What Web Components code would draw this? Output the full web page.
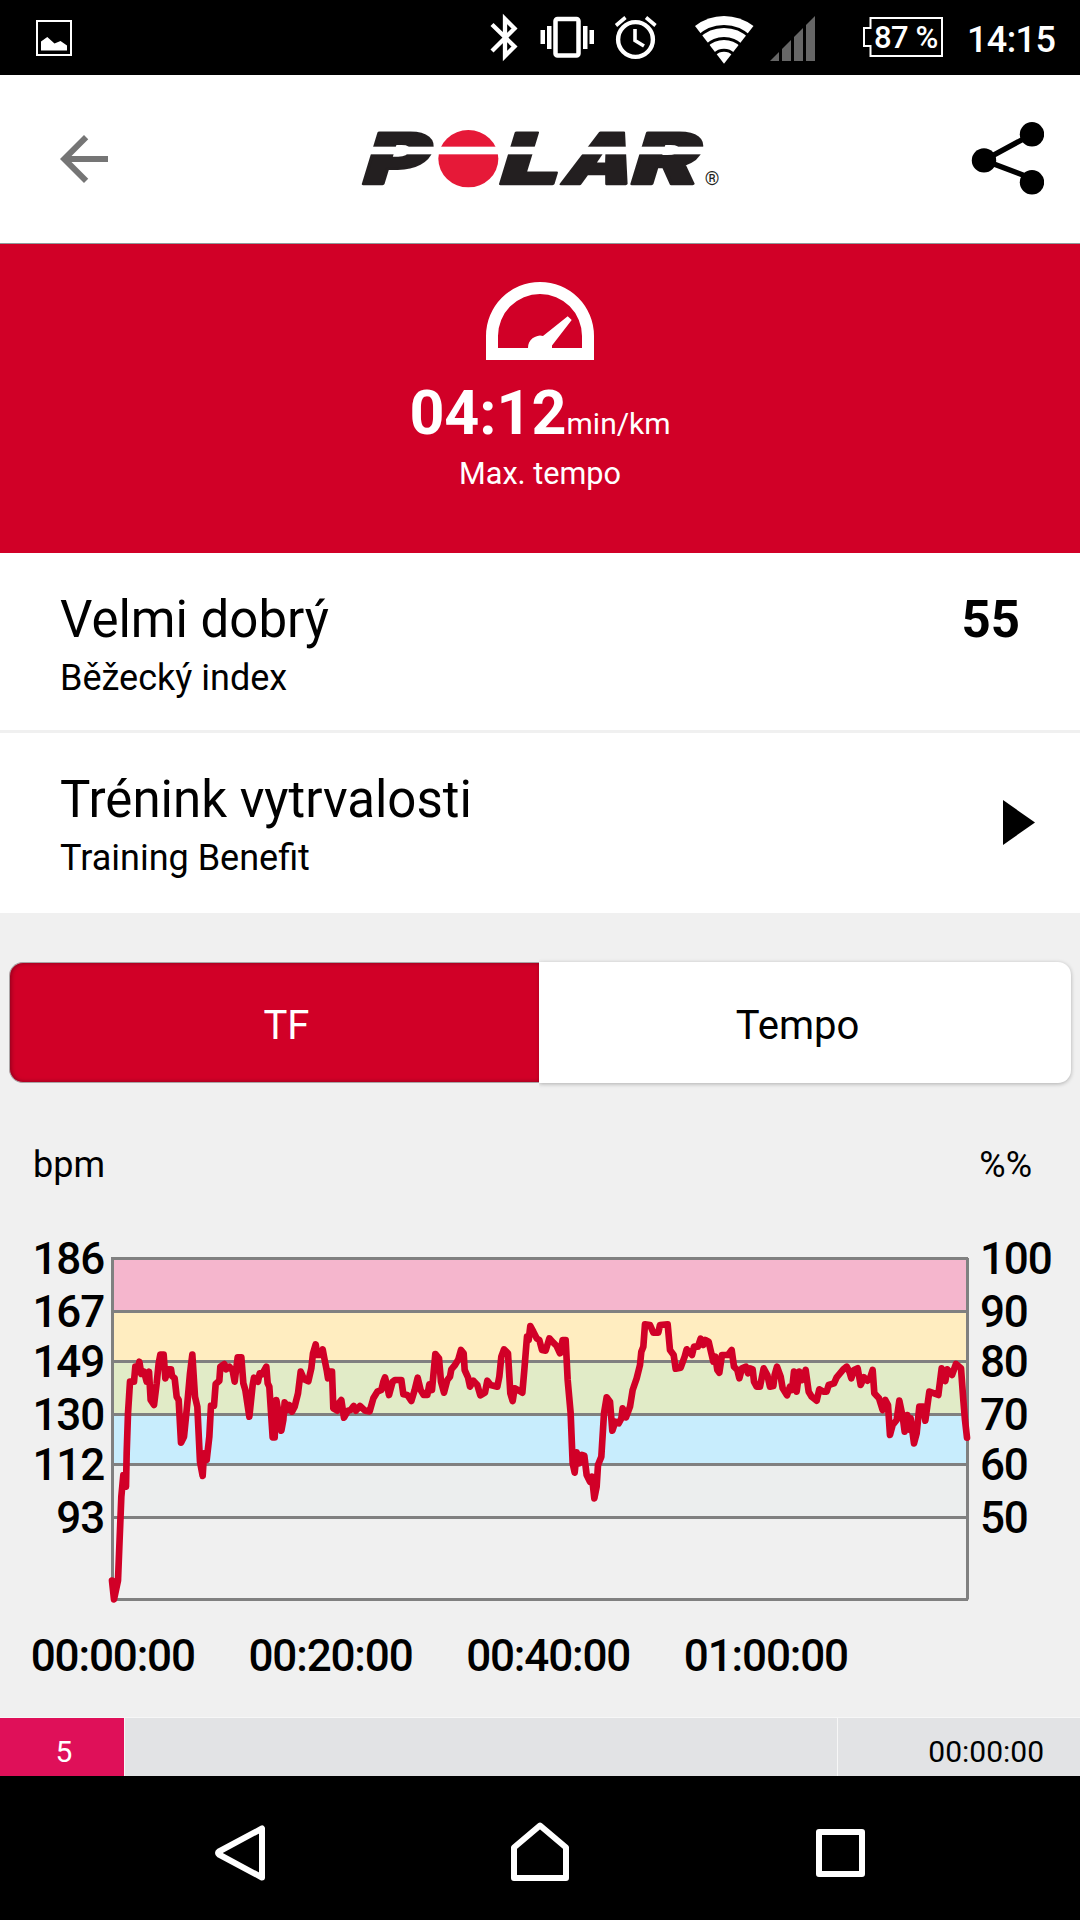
<!DOCTYPE html>
<html lang="cs">
<head>
<meta charset="utf-8">
<title>Polar</title>
<style>
  body {
    margin: 0;
    width: 1080px;
    background: #f0f0f0;
    color: #000;
    font-family: Roboto, "Noto Sans", sans-serif;
  }
</style>
</head>
<body>
<training-page></training-page>

<script>
class StatusBar extends HTMLElement {
  constructor() {
    super();
    this.attachShadow({ mode: "open" });
  }

  connectedCallback() {
    this.shadowRoot.innerHTML = `
      <style>
        :host { display: block; height: 75px; background: #000; }
        svg { display: block; font-weight: 500; fill: #fff; }
      </style>
      <svg width="1080" height="75" viewBox="0 0 1080 75">
        <!-- screenshot notification -->
        <rect x="37" y="21" width="34" height="34" fill="none" stroke="#fff" stroke-width="2"/>
        <path d="M41 50.5V41.5L47.3 37L54.5 43.5L60.5 41L67 45.5V50.5Z"/>
        <!-- bluetooth -->
        <path d="M492 24.5L514.5 46.5L505 56V19L514.5 28.5L492 51" fill="none" stroke="#fff" stroke-width="4.3"/>
        <!-- vibrate -->
        <rect x="555.5" y="19" width="23" height="36.5" rx="2" fill="none" stroke="#fff" stroke-width="4.5"/>
        <path d="M540.5 30h4.5v14h-4.5zM547 26h4.5v23h-4.5zM583 26h4.5v23h-4.5zM589.5 30h4.5v14h-4.5z"/>
        <!-- alarm -->
        <circle cx="635.5" cy="39.5" r="17.4" fill="none" stroke="#fff" stroke-width="4.4"/>
        <path d="M635 29V40.5L644 46M616 25.5L625.5 17.5M655.5 25.5L646 17.5" fill="none" stroke="#fff" stroke-width="3.6"/>
        <!-- wifi -->
        <path d="M724 63.7L695 26Q708 16 724 16T753.5 26Z"/>
        <g fill="none" stroke="#000" stroke-width="3">
          <circle cx="724" cy="63.7" r="37.2"/>
          <circle cx="724" cy="63.7" r="25.2"/>
          <circle cx="724" cy="63.7" r="13.4"/>
        </g>
        <!-- signal -->
        <path d="M770 61L815 16V61Z" fill="#666"/>
        <path d="M779 16h3v46h-3zM791 16h3v46h-3zM803 16h3v46h-3z" fill="#000"/>
        <!-- battery -->
        <path d="M870.5 18H942V56H870.5V46H864V28H870.5Z" fill="none" stroke="#fff" stroke-width="2"/>
        <text x="874" y="48" font-size="31" letter-spacing="-.5">87 %</text>
        <text x="967" y="52" font-size="36" letter-spacing="-.6">14:15</text>
      </svg>
    `;
  }
}
customElements.define("status-bar", StatusBar);

class PolarLogo extends HTMLElement {
  constructor() {
    super();
    this.attachShadow({ mode: "open" });
  }

  connectedCallback() {
    this.shadowRoot.innerHTML = `
      <style>
        :host { display: block; }
        svg { display: block; }
        .word {
          font-family: Inter, Roboto, sans-serif;
          font-size: 212px;
          font-weight: 900;
          fill: #231f20;
          stroke: #231f20;
          stroke-width: 7px;
          stroke-linejoin: round;
        }
      </style>
      <svg width="400" height="100" viewBox="0 0 1200 300">
        <g class="word">
          <text transform="translate(56 222) skewX(-17) scale(1.4 1)">P</text>
          <text transform="translate(467 222) skewX(-17) scale(1.5 1)">L</text>
          <text transform="translate(657 222) skewX(-20) scale(1.23 1)">A</text>
          <text transform="translate(862 222) skewX(-17) scale(1.42 1)">R</text>
        </g>
        <ellipse cx="385" cy="146" rx="90" ry="86" fill="#e61938"/>
        <rect x="60" y="110" width="1040" height="23" fill="#fff"/>
        <text x="1094" y="226" font-size="56" fill="#231f20">®</text>
      </svg>
    `;
  }
}
customElements.define("polar-logo", PolarLogo);

class AppHeader extends HTMLElement {
  constructor() {
    super();
    this.attachShadow({ mode: "open" });
  }

  connectedCallback() {
    this.shadowRoot.innerHTML = `
      <style>
        :host {
          display: flex;
          align-items: center;
          box-sizing: border-box;
          height: 169px;
          padding: 0 36px 0 48px;
          background: #fff;
          border-bottom: 1px solid #8f9999;
        }
        svg { display: block; }
        .logo { margin: 1px auto 0 220px; }
      </style>
      <svg width="72" height="72" viewBox="0 0 24 24" fill="#757575">
        <path d="M20 11H7.83l5.59-5.59L12 4l-8 8 8 8 1.41-1.41L7.83 13H20v-2z"/>
      </svg>
      <polar-logo class="logo"></polar-logo>
      <svg width="80" height="80" viewBox="0 0 80 80">
        <path d="M68 15.3L20 41.3L68 59.5" fill="none" stroke="#000" stroke-width="5.4"/>
        <circle cx="68" cy="15.3" r="12.2"/>
        <circle cx="20" cy="41.4" r="12.2"/>
        <circle cx="68" cy="63.3" r="12.2"/>
      </svg>
    `;
  }
}
customElements.define("app-header", AppHeader);

class PaceHero extends HTMLElement {
  constructor() {
    super();
    this.attachShadow({ mode: "open" });
  }

  connectedCallback() {
    this.shadowRoot.innerHTML = `
      <style>
        :host {
          display: flex;
          flex-direction: column;
          align-items: center;
          box-sizing: border-box;
          height: 309px;
          padding-top: 38px;
          background: #d10027;
          color: #fff;
        }
        .value {
          display: flex;
          align-items: baseline;
          margin-top: 18px;
          height: 70px;
          font-size: 30px;
          line-height: 70px;
        }
        b { font-size: 61px; }
        .label { margin-top: 8px; font-size: 30.6px; line-height: 36px; }
      </style>
      <svg width="108" height="78" viewBox="0 0 108 78" fill="#fff">
        <path fill-rule="evenodd" d="M0 78V54A54 54 0 0 1 108 54V78ZM12 66H96V54A42 42 0 0 0 12 54Z"/>
        <path d="M42 66A12 12 0 0 1 57 54L81.7 34.3L85.7 38L66 63.5V67H42Z"/>
      </svg>
      <div class="value"><b><slot name="value"></slot></b><slot name="unit"></slot></div>
      <div class="label"><slot></slot></div>
    `;
  }
}
customElements.define("pace-hero", PaceHero);

class InfoRow extends HTMLElement {
  constructor() {
    super();
    this.attachShadow({ mode: "open" });
  }

  connectedCallback() {
    this.shadowRoot.innerHTML = `
      <style>
        :host {
          display: flex;
          justify-content: space-between;
          box-sizing: border-box;
          height: 180px;
          padding: 37px 60px 0;
          background: #fff;
        }
        :host([divided]) { border-bottom: 3px solid #f0f0f0; }
        .title, .end { font-size: 51px; line-height: 60px; }
        .end { font-weight: 700; }
        .sub { margin-top: 7px; font-size: 36px; line-height: 42px; }
      </style>
      <div>
        <div class="title"><slot name="title"></slot></div>
        <div class="sub"><slot name="sub"></slot></div>
      </div>
      <div class="end"><slot></slot></div>
    `;
  }
}
customElements.define("info-row", InfoRow);

class TabBar extends HTMLElement {
  constructor() {
    super();
    this.attachShadow({ mode: "open" });
  }

  connectedCallback() {
    this.shadowRoot.innerHTML = `
      <style>
        :host {
          display: grid;
          grid-template-columns: 530px 1fr;
          margin: 49px 9px 0;
          height: 121px;
          font-size: 40px;
          line-height: 128px;
          text-align: center;
        }
        .tab { box-sizing: border-box; height: 121px; }
        .on {
          padding-left: 24px;
          border: 1px solid #a9a5a6;
          border-right: 0;
          border-radius: 14px 0 0 14px;
          background: #d10027;
          color: #fff;
          line-height: 126px;
          box-shadow: inset 1px 0 4px #8a001c;
        }
        .off {
          padding-right: 15px;
          border-radius: 0 13px 13px 0;
          background: #fff;
          box-shadow: 0 1px 4px rgba(0,0,0,0.28);
          clip-path: inset(-8px -8px -8px 0);
        }
      </style>
      <div class="tab on">TF</div>
      <div class="tab off">Tempo</div>
    `;
  }
}
customElements.define("tab-bar", TabBar);

// heart rate trace, three stretches of points: [dx, dy, points], in thirds of a pixel
const TRACE = [
  [0, 0, `36,1022 42,1078 54,1022 58,920 64,770 70,705 78,740 80,640 84,520 90,425 102,425 106,380 112,395 118,365
    124,402 132,395 140,425 147,395 152,480 162,495 170,430 176,370 181,344 191,344 196,415 204,388 213,388 216,408
    224,415 230,470 236,480 243,608 252,590 262,490 270,400 277,344 285,470 292,500 300,665 308,708 312,640 320,660
    328,590 333,497 342,497 347,432 358,422 361,380 373,372 378,388 388,380 398,392 404,425 413,352 424,352 430,430
    436,450 448,530 458,435 462,413 474,425 479,400 486,403 499,380 503,430 508,440 518,592 524,592 529,480 536,520
    544,572 550,540 554,487 562,510 568,495 576,515 584,500 594,460 602,395 612,418 625,424 634,385 639,340 647,313
    652,345 662,345 668,328 674,360 680,390 684,415 690,395 696,395 700,505 712,512 716,490 724,480 732,533 744,512
    752,510 761,498 768,512 780,498 795,512 809,514 820,475 832,455 844,450 850,425 855,412 862,440 867,465`],
  [870, 150, `8,275 15,270 34,270 40,313 52,315 64,333 74,300 83,263 92,300 101,315 112,315 118,283 126,300 136,192
    147,205 153,275 162,308 172,270 180,260 184,238 195,225 205,208 213,180 221,190 224,240 234,262 240,290 250,272
    262,285 271,316 285,308 292,272 302,285 322,290 328,260 334,200 342,178 354,190 361,310 368,333 374,295 384,300
    397,308 403,240 411,140 416,150 421,108 430,125 440,145 448,150 456,180 467,182 478,145 490,158 500,168 510,190
    518,150 527,150 533,270 542,370 548,520 554,548 560,487 568,520 576,495 583,497 590,555 600,575 606,560 613,625
    620,590 624,525 634,500 642,370 650,322 660,335 667,422 676,395 686,400 694,385 698,355 708,382 720,350 728,300
    740,265 750,225 754,185 760,170 765,103 780,105 790,128 805,128 810,105 833,103 840,180 851,195 857,236 872,233
    884,200`],
  [1740, 150, `20,178 36,195 42,170 54,170 62,146 70,165 76,150 86,155 94,190 100,215 106,200 112,240 118,248 126,195
    144,195 155,180 162,230 172,240 178,265 186,235 198,230 204,250 210,235 218,238 222,275 230,290 240,290 251,235
    262,255 270,290 280,288 284,255 291,230 302,260 308,295 321,316 330,290 336,300 342,245 350,305 358,245 366,270
    377,240 386,305 395,320 410,332 418,298 430,305 440,305 446,285 462,280 470,262 480,250 490,238 500,230 508,245
    514,265 522,240 533,235 542,285 552,262 562,272 570,265 578,240 583,310 597,325 608,360 616,330 624,345 630,435
    638,405 650,390 658,332 668,380 674,425 682,375 690,420 692,385 702,460 710,430 718,350 730,350 736,392 748,305
    775,315 785,235 796,273 802,238 816,255 828,222 843,235 850,330 855,390 861,443`]
];

// y, bpm, percent, colour of the zone under the line
const ZONES = [
  [18.5, "186", "100", "#f5b6cd"],
  [71.5, "167", "90", "#ffedc0"],
  [121.5, "149", "80", "#e1ebc7"],
  [174.5, "130", "70", "#c8edfd"],
  [224.5, "112", "60", "#eceeee"],
  [277.5, "93", "50", "#f0f0f0"]
];
const BOTTOM = 359.5;

class HeartChart extends HTMLElement {
  constructor() {
    super();
    this.attachShadow({ mode: "open" });
  }

  connectedCallback() {
    const points = TRACE.map(([dx, dy, pts]) => pts.trim().split(/\s+/).map((p) => {
      const [x, y] = p.split(",").map(Number);
      return `${x + dx},${y + dy}`;
    }).join(" ")).join(" ");

    const bands = ZONES.map(([y, , , color], i) => {
      const next = i + 1 < ZONES.length ? ZONES[i + 1][0] : BOTTOM;
      return `<rect x="112" y="${y}" width="855" height="${next - y}" fill="${color}"/>`;
    }).join("");
    const lines = ZONES.map(([y]) => `<path d="M112 ${y}H968"/>`).join("");
    const labels = ZONES.map(([y, bpm, pct]) => `
      <text x="104" y="${y + 15.5}" text-anchor="end">${bpm}</text>
      <text x="980" y="${y + 15.5}">${pct}</text>`).join("");
    const times = ["00:00:00", "00:20:00", "00:40:00", "01:00:00"].map((t, i) =>
      `<text x="${112.8 + i * 217.7}" y="430.5" text-anchor="middle">${t}</text>`).join("");

    this.shadowRoot.innerHTML = `
      <style>
        :host { display: block; height: 634px; }
        .units {
          display: flex;
          justify-content: space-between;
          padding: 61px 48px 24px 33px;
          font-size: 36px;
          line-height: 42px;
        }
        svg { display: block; font-size: 44px; font-weight: 500; letter-spacing: -1.15px; }
      </style>
      <div class="units"><span>bpm</span><span>%%</span></div>
      <svg width="1080" height="507" viewBox="0 -30 1080 507">
        ${bands}
        <g fill="none" stroke="#808080" stroke-width="3">
          ${lines}
          <path d="M112.5 17V${BOTTOM}H968M967.5 18V${BOTTOM}"/>
        </g>
        <polyline transform="translate(100 0) scale(.33333)" points="${points}"
          fill="none" stroke="#d10027" stroke-width="20" stroke-linejoin="round" stroke-linecap="round"/>
        ${labels}
        ${times}
      </svg>
    `;
  }
}
customElements.define("heart-chart", HeartChart);

class ZoneStrip extends HTMLElement {
  constructor() {
    super();
    this.attachShadow({ mode: "open" });
  }

  connectedCallback() {
    this.shadowRoot.innerHTML = `
      <style>
        :host {
          display: grid;
          grid-template-columns: 124px 712px 1fr;
          column-gap: 1px;
          box-sizing: border-box;
          height: 59px;
          border-top: 1px solid #f7f7f7;
          background: #f7f7f7;
          font-size: 30px;
          line-height: 36px;
        }
        div { background: #e2e3e5; padding-top: 16px; }
        .zone { background: #df1059; color: #fff; text-align: center; padding-left: 4px; }
        .time { text-align: right; padding-right: 36px; }
      </style>
      <div class="zone"><slot name="zone"></slot></div>
      <div></div>
      <div class="time"><slot></slot></div>
    `;
  }
}
customElements.define("zone-strip", ZoneStrip);

class NavBar extends HTMLElement {
  constructor() {
    super();
    this.attachShadow({ mode: "open" });
  }

  connectedCallback() {
    this.shadowRoot.innerHTML = `
      <style>
        :host { display: block; height: 144px; background: #000; }
        svg { display: block; }
      </style>
      <svg width="1080" height="144" viewBox="0 0 1080 144" fill="none" stroke="#fff" stroke-width="6" stroke-linejoin="round">
        <path d="M262 52.5V101.5L219 78.5Q217 77 219 75.5Z"/>
        <path d="M514 102V71.5L540 49.5L566 71.5V102Z"/>
        <rect x="819" y="56" width="43" height="42"/>
      </svg>
    `;
  }
}
customElements.define("nav-bar", NavBar);

class TrainingPage extends HTMLElement {
  constructor() {
    super();
    this.attachShadow({ mode: "open" });
  }

  connectedCallback() {
    this.shadowRoot.innerHTML = `
      <style>
        :host { display: flex; flex-direction: column; width: 1080px; height: 1920px; overflow: hidden; }
        .arrow { display: block; margin: 30px -15px 0 0; }
      </style>
      <status-bar></status-bar>
      <app-header></app-header>
      <pace-hero>
        <span slot="value">04:12</span><span slot="unit">min/km</span>
        Max. tempo
      </pace-hero>
      <info-row divided>
        <span slot="title">Velmi dobrý</span>
        <span slot="sub">Běžecký index</span>
        55
      </info-row>
      <info-row>
        <span slot="title">Trénink vytrvalosti</span>
        <span slot="sub">Training Benefit</span>
        <svg class="arrow" width="32" height="45" viewBox="0 0 32 45"><path d="M0 0L32 22.5L0 45Z"/></svg>
      </info-row>
      <tab-bar></tab-bar>
      <heart-chart></heart-chart>
      <zone-strip><span slot="zone">5</span>00:00:00</zone-strip>
      <nav-bar></nav-bar>
    `;
  }
}
customElements.define("training-page", TrainingPage);
</script>
</body>
</html>
